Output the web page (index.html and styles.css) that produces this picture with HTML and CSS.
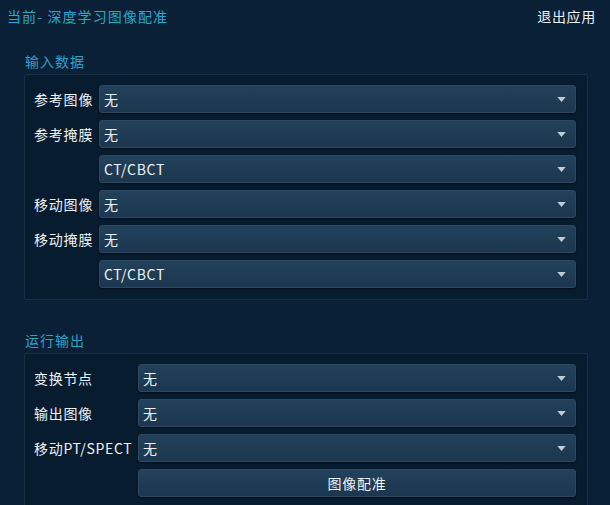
FILE: index.html
```html
<!DOCTYPE html>
<html lang="zh">
<head>
<meta charset="utf-8">
<link rel="stylesheet" href="styles.css">
</head>
<body>
<div class="header">
  <span class="title">当前- 深度学习图像配准</span>
  <span class="exit">退出应用</span>
</div>

<div class="section-label">输入数据</div>
<div class="group group-input">
  <span class="label">参考图像</span>
  <div class="combo"><span>无</span><svg class="arrow" viewBox="0 0 10 6"><path d="M0 0H10L5 6Z"/></svg></div>
  <span class="label">参考掩膜</span>
  <div class="combo"><span>无</span><svg class="arrow" viewBox="0 0 10 6"><path d="M0 0H10L5 6Z"/></svg></div>
  <span class="label"></span>
  <div class="combo"><span>CT/CBCT</span><svg class="arrow" viewBox="0 0 10 6"><path d="M0 0H10L5 6Z"/></svg></div>
  <span class="label">移动图像</span>
  <div class="combo"><span>无</span><svg class="arrow" viewBox="0 0 10 6"><path d="M0 0H10L5 6Z"/></svg></div>
  <span class="label">移动掩膜</span>
  <div class="combo"><span>无</span><svg class="arrow" viewBox="0 0 10 6"><path d="M0 0H10L5 6Z"/></svg></div>
  <span class="label"></span>
  <div class="combo"><span>CT/CBCT</span><svg class="arrow" viewBox="0 0 10 6"><path d="M0 0H10L5 6Z"/></svg></div>
</div>

<div class="section-label second">运行输出</div>
<div class="group group-output">
  <span class="label">变换节点</span>
  <div class="combo"><span>无</span><svg class="arrow" viewBox="0 0 10 6"><path d="M0 0H10L5 6Z"/></svg></div>
  <span class="label">输出图像</span>
  <div class="combo"><span>无</span><svg class="arrow" viewBox="0 0 10 6"><path d="M0 0H10L5 6Z"/></svg></div>
  <span class="label">移动PT/SPECT</span>
  <div class="combo"><span>无</span><svg class="arrow" viewBox="0 0 10 6"><path d="M0 0H10L5 6Z"/></svg></div>
  <span class="label"></span>
  <div class="combo button">图像配准</div>
</div>
</body>
</html>
```
FILE: styles.css
```css
* { box-sizing: border-box; }
html, body {
  margin: 0;
  padding: 0;
  height: 100%;
  overflow: hidden;
}
body {
  background: #0a2036;
  font-family: "Noto Sans CJK SC", "Noto Sans", sans-serif;
  font-size: 14px;
  letter-spacing: 0.7px;
  color: #eef2f5;
}
.header {
  height: 32px;
  display: flex;
  align-items: center;
  justify-content: space-between;
  padding: 0 14px 0 7px;
}
.title {
  color: #2aa7cf;
  font-size: 14px;
  letter-spacing: 1.1px;
}
.exit {
  color: #eef2f5;
}
.section-label {
  margin: 19px 0 3px 25px;
  height: 20px;
  line-height: 20px;
  color: #2aa2cb;
  letter-spacing: 1px;
}
.section-label.second {
  margin-top: 30px;
}
.group {
  margin-left: 24px;
  width: 564px;
  border: 1px solid #172f45;
  border-radius: 2px;
  background: #081c2f;
  padding: 10px 11px 11px 9px;
  display: grid;
  row-gap: 7px;
  column-gap: 6px;
  grid-auto-rows: 28px;
  align-items: center;
}
.group-input {
  grid-template-columns: 59px 1fr;
}
.group-output {
  grid-template-columns: 98px 1fr;
}
.group-input .label {
  text-align: right;
  letter-spacing: 0.8px;
}
.label {
  white-space: nowrap;
}
.combo {
  height: 28px;
  border: 1px solid #2c4862;
  border-radius: 3px;
  background: linear-gradient(#22415b, #1c374f);
  box-shadow: 0 1px 2px rgba(0, 0, 0, 0.55);
  display: flex;
  align-items: center;
  justify-content: space-between;
  padding: 0 9px 0 4px;
  color: #eef2f5;
}
.arrow {
  width: 9px;
  height: 5px;
  fill: #c3ccd5;
}
.button {
  justify-content: center;
  padding: 0;
}
```
